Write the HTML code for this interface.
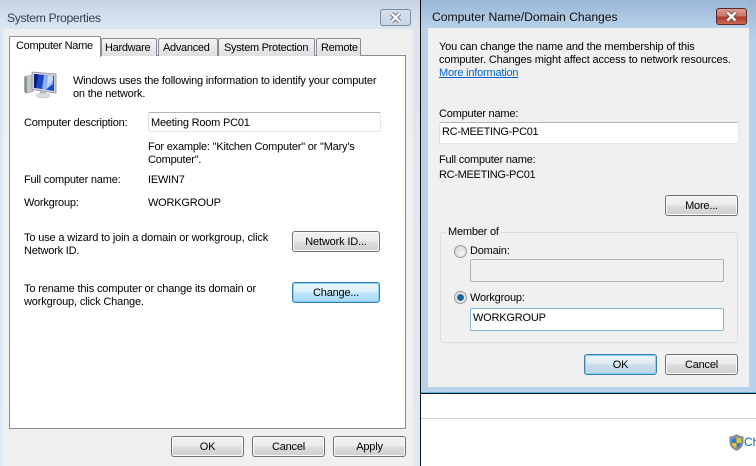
<!DOCTYPE html>
<html><head><meta charset="utf-8"><style>
html,body{margin:0;padding:0;width:756px;height:466px;overflow:hidden;background:#fff}
body{position:relative;font-family:"Liberation Sans",sans-serif;font-size:11px;letter-spacing:-.2px;color:#000}
div{position:absolute;box-sizing:border-box}
.t{white-space:nowrap;line-height:14px;height:14px;margin-top:1px}
.w{letter-spacing:-.15px}
.n{letter-spacing:-.3px}
.b{height:21px;width:73px;border:1px solid #707070;border-radius:3px;box-shadow:inset 0 0 0 1px #fbfbfb;background:linear-gradient(#f3f3f3 0,#ebebeb 48%,#dcdcdc 52%,#cfcfcf 100%);text-align:center;line-height:21px;white-space:nowrap}
.d{border-color:#3c7fb1;box-shadow:inset 0 0 0 1px #7fd2f6;background:linear-gradient(#eaf6fd 0,#d9f0fc 48%,#bee6fd 52%,#a7d9f5 100%)}
.i{border:1px solid #abadb3;border-top-color:#b5b5b5;border-left-color:#dbdfe6;border-right-color:#e3e9ef;border-bottom-color:#e3e9ef;background:#fff;border-radius:2px}
.tab{height:18px;top:38px;border:1px solid #898c95;border-bottom:0;background:linear-gradient(#f3f3f3,#dfdfdf);border-radius:2px 2px 0 0}
.r{width:13px;height:13px;border-radius:50%;border:1px solid #9a9a9a;background:radial-gradient(circle at 60% 65%,#f4f4f4,#cfcfcf)}
</style></head><body>

<!-- left window -->
<div style="left:0;top:0;width:420px;height:466px;background:linear-gradient(#c3d2e3 0,#cfdcea 12px,#dbe6f2 29px,#dfe9f4 100%)"></div>
<div style="left:3px;top:29px;width:410px;height:437px;background:#f0f0f0"></div>
<div class="t" style="left:7px;top:10px;font-size:12.2px;letter-spacing:-.35px;color:#33404e">System Properties</div>
<div style="left:380px;top:9px;width:31px;height:17px;border:1px solid #7c8ba1;border-radius:3px;background:linear-gradient(#d5dfea,#c9d6e5)">
<svg width="29" height="15" style="position:absolute;left:0;top:0"><path d="M10.500 3.500L18.500 11.500M18.500 3.500L10.500 11.500" stroke="#5f6b7a" stroke-width="4.400" fill="none"/><path d="M10.500 3.500L18.500 11.500M18.500 3.500L10.500 11.500" stroke="#f6f8fa" stroke-width="2.400" fill="none"/></svg></div>

<!-- tab panel -->
<div style="left:9px;top:55px;width:397px;height:374px;background:#fff;border:1px solid #898c95"></div>
<div class="tab" style="left:101px;width:56px"></div>
<div class="tab" style="left:158px;width:60px"></div>
<div class="tab" style="left:218px;width:97px"></div>
<div class="tab" style="left:316px;width:45px"></div>
<div style="left:9px;top:36px;width:92px;height:21px;background:#fff;border:1px solid #898c95;border-bottom:0;border-radius:2px 2px 0 0"></div>
<div class="t n" style="left:16px;top:38px">Computer Name</div>
<div class="t n" style="left:105px;top:40px">Hardware</div>
<div class="t n" style="left:163px;top:40px">Advanced</div>
<div class="t n" style="left:224px;top:40px">System Protection</div>
<div class="t n" style="left:321px;top:40px">Remote</div>

<!-- computer icon -->
<svg width="36" height="30" style="position:absolute;left:23px;top:70px">
<path d="M1.500 6.500L10 5V21.500L3 23L1.500 21.500Z" fill="#c4c8cd" stroke="#8f949a" stroke-width=".6"/>
<path d="M1.500 6.500L4 7V23L3 23L1.500 21.500Z" fill="#8e9298"/>
<rect x="2.200" y="9" width="1.400" height="3" fill="#5fae3a"/>
<path d="M9 2L33 4V23L9 19.500Z" fill="#cfd2d8" stroke="#8c9197" stroke-width=".8"/>
<path d="M11 4L31 5.800V21L11 17.800Z" fill="#1b46c6"/>
<path d="M11 4L15.500 4.400L13 18.200L11 17.800Z" fill="#0b1f80"/>
<path d="M21 5L30 5.800V14L23 19.800L19 19.200Z" fill="#8fb2ee"/>
<path d="M25 5.400L30 5.800V10L24 18Z" fill="#c8d9f6"/>
<rect x="17" y="21" width="6" height="4" fill="#b5b9be"/>
<ellipse cx="20" cy="25.500" rx="7" ry="2.500" fill="#dcdee1" stroke="#b4b7bb" stroke-width=".5"/>
</svg>

<div class="t" style="left:73px;top:73px">Windows uses the following information to identify your computer</div>
<div class="t" style="left:73px;top:86px">on the network.</div>
<div class="t" style="left:24px;top:115px">Computer description:</div>
<div class="i" style="left:148px;top:112px;width:233px;height:20px"></div>
<div class="t" style="left:151px;top:115px">Meeting Room PC01</div>
<div class="t" style="left:148px;top:139px">For example: "Kitchen Computer" or "Mary's</div>
<div class="t" style="left:148px;top:152px">Computer".</div>
<div class="t" style="left:24px;top:172px">Full computer name:</div>
<div class="t" style="left:148px;top:172px">IEWIN7</div>
<div class="t" style="left:24px;top:195px">Workgroup:</div>
<div class="t" style="left:148px;top:195px">WORKGROUP</div>
<div class="t w" style="left:24px;top:230px">To use a wizard to join a domain or workgroup, click</div>
<div class="t" style="left:24px;top:243px">Network ID.</div>
<div class="b w" style="left:292px;top:231px;width:88px">Network ID...</div>
<div class="t w" style="left:24px;top:281px">To rename this computer or change its domain or</div>
<div class="t w" style="left:24px;top:294px">workgroup, click Change.</div>
<div class="b d" style="left:292px;top:282px;width:88px">Change...</div>
<div class="b" style="left:171px;top:436px">OK</div>
<div class="b" style="left:252px;top:436px">Cancel</div>
<div class="b" style="left:333px;top:436px">Apply</div>

<!-- right window -->
<div style="left:421px;top:0;width:335px;height:393px;background:linear-gradient(#98b6d6 0,#aac5e1 14px,#b9d1ea 28px,#b9d1ea 100%)"></div>
<div style="left:421px;top:392px;width:335px;height:1px;background:#4fb6dc"></div>
<div style="left:749px;top:0;width:7px;height:392px;background:linear-gradient(#9ab5d3,#b9d1ea 40px)"></div>
<div style="left:428px;top:28px;width:321px;height:359px;background:#f0f0f0"></div>
<div style="left:421px;top:393px;width:335px;height:1px;background:#111"></div>
<!-- divider -->
<div style="left:420px;top:0;width:1px;height:466px;background:#111"></div>
<div class="t" style="left:432px;top:9px;font-size:12.200px;letter-spacing:-.05px;color:#111">Computer Name/Domain Changes</div>
<div style="left:716px;top:8px;width:31px;height:17px;border:1px solid #5a2a2a;border-radius:3px;background:linear-gradient(#dc9c90 0,#c9786a 45%,#b0392a 55%,#c96a55 100%)">
<svg width="29" height="15" style="position:absolute;left:0;top:0"><path d="M10.500 3.500L18.500 11.500M18.500 3.500L10.500 11.500" stroke="#7a3a32" stroke-width="4.400" fill="none"/><path d="M10.500 3.500L18.500 11.500M18.500 3.500L10.500 11.500" stroke="#fff" stroke-width="2.600" fill="none"/></svg></div>

<div class="t w" style="left:439px;top:39px">You can change the name and the membership of this</div>
<div class="t w" style="left:439px;top:52px">computer. Changes might affect access to network resources.</div>
<div class="t" style="left:439px;top:65px;color:#0066cc;text-decoration:underline">More information</div>
<div class="t" style="left:439px;top:106px">Computer name:</div>
<div class="i" style="left:439px;top:122px;width:300px;height:22px"></div>
<div class="t n" style="left:442px;top:124px">RC-MEETING-PC01</div>
<div class="t" style="left:439px;top:152px">Full computer name:</div>
<div class="t n" style="left:439px;top:167px">RC-MEETING-PC01</div>
<div class="b" style="left:665px;top:195px">More...</div>

<div style="left:440px;top:232px;width:298px;height:111px;border:1px solid #d5dfe5;border-radius:3px"></div>
<div class="t" style="left:446px;top:224px;background:#f0f0f0;padding:0 2px">Member of</div>
<div class="r" style="left:454px;top:245px"></div>
<div class="t" style="left:470px;top:243px">Domain:</div>
<div style="left:470px;top:259px;width:254px;height:23px;border:1px solid #b0b0b0;border-radius:2px;background:#f0f0f0"></div>
<div class="r" style="left:454px;top:291px;background:radial-gradient(circle,#1c6fa8 0,#0f5a90 3px,#e0e0e0 3.600px,#eee 100%)"></div>
<div class="t" style="left:470px;top:290px">Workgroup:</div>
<div style="left:470px;top:308px;width:254px;height:23px;border:1px solid #7fb8dd;border-radius:2px;background:#fff"></div>
<div class="t" style="left:473px;top:310px">WORKGROUP</div>
<div class="b d" style="left:584px;top:354px;background:linear-gradient(#ecf3f9 0,#deebf4 48%,#cbdeea 52%,#bcd5e5 100%)">OK</div>
<div class="b" style="left:665px;top:354px">Cancel</div>

<!-- background bottom right -->
<div style="left:421px;top:418px;width:335px;height:1px;background:#cfcfcf"></div>
<svg width="15" height="17" style="position:absolute;left:729px;top:434px">
<path d="M7.500 .5C5.500 2 3 2.800 .8 2.800V8C.8 12 4 15 7.500 16.500C11 15 14.200 12 14.200 8V2.800C12 2.800 9.500 2 7.500 .5Z" fill="#8d9298" stroke="#777c82" stroke-width=".6"/>
<path d="M3 4.500H7.500V9H3Z" fill="#2f7fd6"/><path d="M7.500 3.500C9 4.200 10.500 4.500 12 4.500V9H7.500Z" fill="#f2c51e"/>
<path d="M3 9H7.500V14C5 13 3.200 11.500 3 9Z" fill="#f2c51e"/><path d="M7.500 9H12C11.800 11.500 10 13 7.500 14Z" fill="#2f7fd6"/>
</svg>
<div class="t" style="left:744px;top:434px;color:#0066cc;font-size:12px;letter-spacing:0">Ch</div>
</body></html>
